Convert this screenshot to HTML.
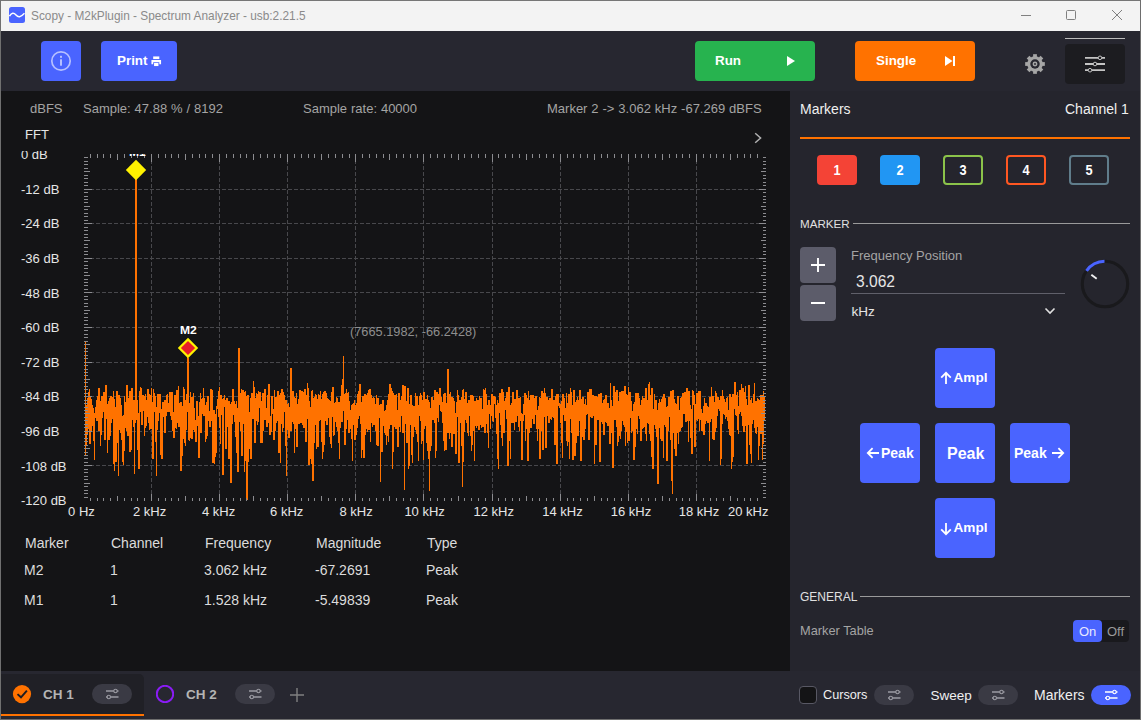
<!DOCTYPE html>
<html><head><meta charset="utf-8"><title>Scopy</title>
<style>
*{box-sizing:border-box;margin:0;padding:0}
html,body{width:1141px;height:720px;overflow:hidden;background:#272730}
body{font-family:"Liberation Sans",sans-serif;position:relative;color:#fff}
.abs{position:absolute}
.t{position:absolute;white-space:nowrap;line-height:1}
#titlebar{left:0;top:0;width:1141px;height:31px;background:#f3f3f3}
#toolbar{left:0;top:31px;width:1141px;height:60px;background:#272730}
#plotbg{left:0;top:91px;width:790px;height:580px;background:#141416}
#panel{left:790px;top:91px;width:351px;height:580px;background:#25252d}
#bottom{left:0;top:671px;width:1141px;height:49px;background:#272730}
.btn{position:absolute;border-radius:4px}
.blue{background:#4a64ff}
.b{font-weight:bold}
.mk{position:absolute;top:155px;width:40px;height:30px;border:2px solid;border-radius:4px;font-weight:bold;font-size:14.5px;color:#fff;text-align:center;line-height:27px}
.mk span{display:inline-block;transform:scaleX(.88)}
.pill{position:absolute;width:40px;height:20px;border-radius:10px;background:#3a3a44}
.tb{font-size:14px;color:#dcdcdc}
.yl,.xl{font-size:13px;color:#e6e6e6}
.hd{font-size:13px;color:#a4a4a4;word-spacing:0.3px}
</style></head><body>
<div id="titlebar" class="abs"></div>
<div id="toolbar" class="abs"></div>
<div id="plotbg" class="abs"></div>
<div id="panel" class="abs"></div>
<div id="bottom" class="abs"></div>

<!-- TITLEBAR -->
<div class="abs" style="left:0;top:0;width:1141px;height:1px;background:#767676"></div>
<div class="abs" style="left:0;top:0;width:1.3px;height:720px;background:#707070"></div>
<div class="abs" style="left:1139.7px;top:0;width:1.3px;height:720px;background:#6e6e6e"></div>
<div class="abs" style="left:0;top:718.6px;width:1141px;height:1.4px;background:#6e6e6e"></div>
<svg class="abs" style="left:9px;top:7px" width="16" height="16" viewBox="0 0 16 16"><rect width="16" height="16" rx="2.5" fill="#4a64ff"/><path d="M0.5 9.2 C2.5 5.5 4.8 5.5 7 8 S11.5 10.5 15.5 6.2" fill="none" stroke="#fff" stroke-width="1.5"/></svg>
<div class="t" id="ttl" style="left:31px;top:11px;font-size:11.85px;color:#8a8a8a">Scopy - M2kPlugin - Spectrum Analyzer - usb:2.21.5</div>
<svg class="abs" style="left:1010px;top:5px" width="125" height="22" viewBox="0 0 125 22" fill="none" stroke="#808080" stroke-width="1">
<path d="M11 10.5h10"/><rect x="56.5" y="5.5" width="9" height="9" rx="1"/><path d="M102 5l10 10M112 5l-10 10"/></svg>

<!-- TOOLBAR -->
<div class="btn blue" style="left:41px;top:41px;width:40px;height:40px"></div>
<svg class="abs" style="left:50px;top:50px" width="22" height="22" viewBox="0 0 22 22"><circle cx="11" cy="11" r="9.2" fill="none" stroke="#b6c0ff" stroke-width="1.7"/><rect x="10" y="9.3" width="2" height="6.4" fill="#b6c0ff"/><rect x="10" y="5.8" width="2" height="2" fill="#b6c0ff"/></svg>
<div class="btn blue" style="left:101px;top:41px;width:76px;height:40px"></div>
<div class="t b" style="left:117px;top:54px;font-size:13.4px">Print</div>
<svg class="abs" style="left:151px;top:56px" width="10.5" height="10.5" viewBox="0 0 12 12" fill="#fff"><rect x="2.5" y="0.5" width="7" height="3"/><path d="M0.5 4.5h11v5h-2v-2.5h-7v2.5h-2z"/><rect x="3.5" y="8" width="5" height="3.5"/></svg>

<div class="btn" style="left:695px;top:41px;width:120px;height:40px;background:#27b34f"></div>
<div class="t b" style="left:715px;top:54px;font-size:13.4px">Run</div>
<svg class="abs" style="left:786px;top:55px" width="10" height="12" viewBox="0 0 10 12"><path d="M1 1l8 5-8 5z" fill="#fff"/></svg>
<div class="btn" style="left:855px;top:41px;width:120px;height:40px;background:#ff7200"></div>
<div class="t b" style="left:876px;top:54px;font-size:13.4px">Single</div>
<svg class="abs" style="left:944px;top:55px" width="12" height="12" viewBox="0 0 12 12" fill="#fff"><path d="M1 1l7.5 5-7.5 5z"/><rect x="9" y="1" width="2" height="10"/></svg>

<!-- gear -->
<svg class="abs" style="left:1023px;top:52px" width="24" height="24" viewBox="-12.7 -12.7 25.4 25.4">
<g fill="#a6a6a6"><circle r="8.2"/>
<g id="th"><rect x="-2" y="-10.4" width="4" height="4"/></g>
<use href="#th" transform="rotate(45)"/><use href="#th" transform="rotate(90)"/><use href="#th" transform="rotate(135)"/><use href="#th" transform="rotate(180)"/><use href="#th" transform="rotate(225)"/><use href="#th" transform="rotate(270)"/><use href="#th" transform="rotate(315)"/></g>
<circle r="5" fill="#272730"/><circle r="2.6" fill="#a6a6a6"/><circle r="1" fill="#272730"/></svg>
<div class="abs" style="left:1065px;top:38px;width:60px;height:1px;background:#bcbcbc"></div>
<div class="btn" style="left:1065px;top:44px;width:60px;height:40px;background:#1c1c20"></div>
<svg class="abs" style="left:1083px;top:54px" width="24" height="20" viewBox="0 0 24 20"><g stroke="#c4c4c4" stroke-width="1.8"><path d="M2 3.8h20M2 10h20M2 16.2h20"/></g><g fill="#1c1c20" stroke="#c4c4c4" stroke-width="1"><circle cx="17" cy="3.8" r="1.8"/><circle cx="12" cy="10" r="1.8"/><circle cx="7" cy="16.2" r="1.8"/></g></svg>

<!-- PLOT -->
<svg class="abs" style="left:0;top:0" width="790" height="670" viewBox="0 0 790 670">
<g stroke="#48484c" stroke-width="1" stroke-dasharray="4 2" fill="none">
<path d="M151.5 154V501 M219.5 154V501 M287.5 154V501 M355.5 154V501 M423.5 154V501 M492.5 154V501 M560.5 154V501 M628.5 154V501 M696.5 154V501 M84 189.5H766 M84 223.5H766 M84 258.5H766 M84 292.5H766 M84 327.5H766 M84 362.5H766 M84 396.5H766 M84 431.5H766 M84 465.5H766"/>
</g>
<path d="M85.5 341.7L85.5 454.5L85.5 404.7L85.5 437.8L85.5 408.7L85.5 415.2L85.5 440.6L85.5 409.7L85.9 446.2L86.2 412.4L86.5 438.2L86.8 434.8L87.1 412.8L87.4 398.3L87.7 430.7L88.0 422.6L88.3 405.5L88.6 391.8L89.0 407.2L89.3 413.9L89.6 388.8L89.9 443.5L90.2 397.0L90.5 418.8L90.8 428.6L91.1 431.4L91.4 417.8L91.7 398.8L92.0 425.5L92.4 407.1L92.7 405.1L93.0 414.9L93.3 408.2L93.6 439.6L93.9 440.3L94.2 423.7L94.5 460.0L94.8 412.7L95.1 417.6L95.5 406.9L95.8 411.7L96.1 418.3L96.4 399.6L96.7 403.1L97.0 421.3L97.3 407.3L97.6 409.0L97.9 396.2L98.2 402.0L98.6 418.9L98.9 388.2L99.2 431.3L99.5 413.0L99.8 401.0L100.1 427.9L100.4 410.3L100.7 445.7L101.0 404.1L101.3 400.7L101.6 407.4L102.0 396.2L102.3 417.6L102.6 403.2L102.9 406.6L103.2 407.1L103.5 411.6L103.8 397.8L104.1 392.0L104.4 410.9L104.7 404.3L105.1 440.1L105.4 403.0L105.7 404.8L106.0 385.3L106.3 398.5L106.6 419.0L106.9 414.3L107.2 404.1L107.5 452.7L107.8 411.3L108.2 426.5L108.5 431.4L108.8 440.4L109.1 400.6L109.4 430.1L109.7 421.1L110.0 414.1L110.3 396.4L110.6 436.4L110.9 411.8L111.2 408.2L111.6 395.8L111.9 398.6L112.2 396.7L112.5 419.4L112.8 413.1L113.1 415.5L113.4 395.7L113.7 390.9L114.0 428.0L114.3 470.5L114.7 422.0L115.0 421.9L115.3 410.5L115.6 406.8L115.9 420.2L116.2 462.3L116.5 415.1L116.8 407.6L117.1 391.3L117.4 403.4L117.7 409.4L118.1 405.8L118.4 476.0L118.7 441.6L119.0 394.9L119.3 400.2L119.6 396.2L119.9 399.5L120.2 414.1L120.5 413.8L120.8 433.1L121.2 405.3L121.5 439.7L121.8 438.7L122.1 423.5L122.4 427.0L122.7 416.3L123.0 441.9L123.3 464.6L123.6 433.3L123.9 415.3L124.3 451.1L124.6 396.2L124.9 406.0L125.2 428.2L125.5 420.8L125.8 416.0L126.1 415.3L126.4 430.8L126.7 397.4L127.0 385.3L127.3 411.2L127.7 410.5L128.0 435.5L128.3 433.2L128.6 416.2L128.9 420.1L129.2 398.2L129.5 427.1L129.8 452.4L130.1 391.5L130.4 408.9L130.8 428.4L131.1 408.4L131.4 450.4L131.7 408.9L132.0 388.5L132.3 396.7L132.6 403.2L132.9 420.3L133.2 415.2L133.5 426.6L133.9 400.5L134.2 408.8L134.5 474.0L134.8 416.8L135.1 422.6L135.4 398.9L135.7 199.2L136.0 170.4L136.3 222.3L136.6 398.7L136.9 401.6L137.3 422.4L137.6 409.3L137.9 415.6L138.2 449.5L138.5 450.0L138.8 419.3L139.1 469.0L139.4 403.3L139.7 391.0L140.0 411.9L140.4 392.6L140.7 386.7L141.0 391.2L141.3 415.3L141.6 422.8L141.9 422.4L142.2 424.4L142.5 423.8L142.8 405.6L143.1 394.9L143.4 397.7L143.8 410.7L144.1 404.6L144.4 399.4L144.7 435.7L145.0 404.4L145.3 394.4L145.6 400.1L145.9 401.3L146.2 410.7L146.5 425.7L146.9 399.8L147.2 416.7L147.5 399.4L147.8 389.4L148.1 413.9L148.4 413.7L148.7 391.9L149.0 402.2L149.3 426.4L149.6 430.3L150.0 428.0L150.3 394.6L150.6 399.1L150.9 428.5L151.2 398.3L151.5 388.2L151.8 404.5L152.1 415.9L152.4 408.2L152.7 429.9L153.0 458.5L153.4 389.5L153.7 404.8L154.0 409.0L154.3 392.9L154.6 412.4L154.9 396.3L155.2 398.3L155.5 423.4L155.8 420.8L156.1 418.6L156.5 476.0L156.8 406.9L157.1 420.4L157.4 413.0L157.7 429.9L158.0 394.3L158.3 415.7L158.6 411.5L158.9 407.0L159.2 394.7L159.6 412.9L159.9 393.9L160.2 409.9L160.5 408.8L160.8 409.1L161.1 455.1L161.4 412.2L161.7 425.4L162.0 459.0L162.3 426.2L162.6 410.9L163.0 402.1L163.3 407.9L163.6 417.0L163.9 409.3L164.2 408.0L164.5 400.0L164.8 432.7L165.1 407.8L165.4 421.0L165.7 419.5L166.1 400.4L166.4 409.7L166.7 407.8L167.0 400.9L167.3 394.2L167.6 412.1L167.9 406.0L168.2 409.7L168.5 409.5L168.8 403.3L169.1 411.7L169.5 408.8L169.8 410.7L170.1 392.3L170.4 403.1L170.7 396.1L171.0 392.2L171.3 420.4L171.6 407.8L171.9 392.2L172.2 397.8L172.6 429.3L172.9 430.9L173.2 412.1L173.5 437.7L173.8 421.5L174.1 437.6L174.4 404.1L174.7 400.0L175.0 395.1L175.3 427.7L175.7 402.5L176.0 404.4L176.3 428.8L176.6 395.8L176.9 389.9L177.2 422.8L177.5 391.4L177.8 413.8L178.1 410.4L178.4 386.3L178.7 398.1L179.1 427.1L179.4 412.5L179.7 409.4L180.0 416.4L180.3 424.4L180.6 417.4L180.9 402.3L181.2 471.0L181.5 408.0L181.8 412.2L182.2 455.5L182.5 416.7L182.8 405.6L183.1 409.5L183.4 439.3L183.7 387.4L184.0 399.8L184.3 389.4L184.6 432.9L184.9 420.1L185.3 445.5L185.6 400.2L185.9 419.8L186.2 430.1L186.5 412.9L186.8 394.3L187.1 398.6L187.4 411.9L187.7 348.5L188.0 393.8L188.3 407.5L188.7 403.0L189.0 435.0L189.3 440.7L189.6 403.4L189.9 412.7L190.2 437.8L190.5 392.5L190.8 405.3L191.1 399.3L191.4 435.9L191.8 397.1L192.1 438.8L192.4 396.8L192.7 411.6L193.0 416.4L193.3 408.1L193.6 393.3L193.9 419.9L194.2 430.1L194.5 409.0L194.8 421.6L195.2 432.3L195.5 427.1L195.8 442.4L196.1 424.0L196.4 417.7L196.7 418.0L197.0 400.9L197.3 418.8L197.6 409.9L197.9 425.8L198.3 416.0L198.6 455.4L198.9 420.9L199.2 457.6L199.5 401.9L199.8 408.1L200.1 424.9L200.4 410.9L200.7 392.8L201.0 432.7L201.4 398.6L201.7 412.5L202.0 410.1L202.3 398.0L202.6 414.0L202.9 409.7L203.2 403.4L203.5 387.9L203.8 416.2L204.1 398.1L204.4 402.8L204.8 405.2L205.1 413.6L205.4 416.0L205.7 441.5L206.0 430.1L206.3 438.1L206.6 401.6L206.9 420.6L207.2 426.9L207.5 435.7L207.9 397.7L208.2 396.4L208.5 404.0L208.8 419.2L209.1 421.4L209.4 418.6L209.7 411.4L210.0 427.4L210.3 412.0L210.6 420.2L211.0 390.5L211.3 389.3L211.6 408.3L211.9 421.3L212.2 390.1L212.5 417.8L212.8 415.6L213.1 462.6L213.4 410.9L213.7 409.8L214.0 424.1L214.4 409.8L214.7 463.6L215.0 435.0L215.3 413.8L215.6 444.9L215.9 452.7L216.2 418.0L216.5 422.0L216.8 406.9L217.1 408.9L217.5 401.2L217.8 404.5L218.1 402.5L218.4 396.0L218.7 414.2L219.0 417.0L219.3 387.4L219.6 428.2L219.9 402.2L220.2 405.0L220.5 444.2L220.9 398.0L221.2 395.3L221.5 405.5L221.8 401.8L222.1 398.9L222.4 429.1L222.7 409.1L223.0 475.0L223.3 398.0L223.6 399.2L224.0 398.3L224.3 407.0L224.6 395.3L224.9 403.6L225.2 403.3L225.5 422.2L225.8 448.6L226.1 429.7L226.4 415.4L226.7 432.9L227.1 397.9L227.4 407.9L227.7 405.5L228.0 405.6L228.3 403.7L228.6 410.3L228.9 459.0L229.2 401.3L229.5 409.8L229.8 408.7L230.1 404.4L230.5 439.0L230.8 483.0L231.1 420.8L231.4 437.4L231.7 420.1L232.0 402.0L232.3 423.8L232.6 401.6L232.9 388.9L233.2 410.2L233.6 414.5L233.9 410.7L234.2 403.6L234.5 400.6L234.8 405.9L235.1 405.0L235.4 436.9L235.7 428.3L236.0 420.7L236.3 401.5L236.7 418.0L237.0 407.6L237.3 460.2L237.6 440.1L237.9 419.9L238.2 472.0L238.5 403.3L238.8 403.9L239.1 347.7L239.4 409.3L239.7 411.2L240.1 411.2L240.4 431.3L240.7 395.2L241.0 424.2L241.3 388.6L241.6 392.7L241.9 455.9L242.2 411.5L242.5 398.6L242.8 389.9L243.2 411.8L243.5 419.9L243.8 423.5L244.1 392.0L244.4 423.4L244.7 472.0L245.0 428.9L245.3 409.1L245.6 391.4L245.9 429.8L246.2 398.6L246.6 409.6L246.9 395.6L247.2 499.5L247.5 422.1L247.8 395.0L248.1 410.4L248.4 451.5L248.7 461.6L249.0 411.8L249.3 418.2L249.7 429.0L250.0 416.2L250.3 417.5L250.6 397.8L250.9 459.4L251.2 397.8L251.5 431.1L251.8 393.3L252.1 402.6L252.4 394.8L252.8 418.8L253.1 414.9L253.4 414.1L253.7 381.5L254.0 406.8L254.3 415.4L254.6 412.6L254.9 419.5L255.2 443.0L255.5 433.3L255.8 398.0L256.2 419.0L256.5 392.7L256.8 421.0L257.1 420.1L257.4 409.5L257.7 424.9L258.0 414.9L258.3 391.1L258.6 395.7L258.9 398.9L259.3 405.4L259.6 394.1L259.9 392.3L260.2 408.2L260.5 402.3L260.8 442.7L261.1 401.9L261.4 411.8L261.7 401.2L262.0 404.9L262.3 419.0L262.7 442.8L263.0 393.3L263.3 430.3L263.6 411.0L263.9 416.2L264.2 418.4L264.5 401.7L264.8 388.8L265.1 420.4L265.4 404.5L265.8 418.2L266.1 407.9L266.4 414.0L266.7 426.6L267.0 427.1L267.3 423.6L267.6 394.6L267.9 410.0L268.2 422.8L268.5 394.6L268.9 383.7L269.2 411.8L269.5 429.1L269.8 424.7L270.1 434.8L270.4 416.3L270.7 434.8L271.0 421.6L271.3 420.5L271.6 407.5L271.9 395.6L272.3 401.3L272.6 413.2L272.9 413.2L273.2 409.1L273.5 414.7L273.8 416.4L274.1 439.8L274.4 419.4L274.7 389.9L275.0 430.5L275.4 409.8L275.7 405.4L276.0 396.8L276.3 423.0L276.6 419.8L276.9 421.0L277.2 413.8L277.5 411.9L277.8 391.3L278.1 397.4L278.5 396.3L278.8 453.1L279.1 448.2L279.4 402.7L279.7 395.1L280.0 410.9L280.3 406.9L280.6 462.5L280.9 393.3L281.2 398.4L281.5 397.1L281.9 389.4L282.2 421.0L282.5 432.4L282.8 427.7L283.1 409.1L283.4 403.6L283.7 392.3L284.0 402.3L284.3 404.8L284.6 400.7L285.0 411.5L285.3 408.1L285.6 445.5L285.9 400.1L286.2 422.0L286.5 476.0L286.8 404.9L287.1 418.1L287.4 430.2L287.7 420.8L288.0 405.2L288.4 403.1L288.7 432.0L289.0 438.1L289.3 409.1L289.6 407.0L289.9 414.3L290.2 422.6L290.5 406.4L290.8 431.3L291.1 367.9L291.5 411.4L291.8 390.8L292.1 404.9L292.4 395.8L292.7 410.8L293.0 421.9L293.3 421.1L293.6 390.7L293.9 402.9L294.2 417.9L294.6 453.1L294.9 410.0L295.2 403.9L295.5 413.0L295.8 420.5L296.1 404.1L296.4 393.4L296.7 422.4L297.0 447.4L297.3 416.4L297.6 412.9L298.0 403.6L298.3 424.3L298.6 399.5L298.9 401.7L299.2 409.8L299.5 423.8L299.8 389.7L300.1 417.7L300.4 398.6L300.7 422.1L301.1 422.7L301.4 400.9L301.7 418.5L302.0 391.4L302.3 410.1L302.6 425.0L302.9 422.6L303.2 413.1L303.5 404.2L303.8 391.7L304.2 428.4L304.5 414.0L304.8 423.2L305.1 389.1L305.4 428.9L305.7 442.1L306.0 440.2L306.3 414.0L306.6 395.0L306.9 395.8L307.2 401.9L307.6 382.9L307.9 393.0L308.2 416.8L308.5 425.2L308.8 464.7L309.1 401.4L309.4 448.3L309.7 404.2L310.0 414.7L310.3 414.9L310.7 416.7L311.0 426.5L311.3 463.5L311.6 415.8L311.9 391.1L312.2 430.7L312.5 390.3L312.8 481.0L313.1 415.6L313.4 398.5L313.7 398.5L314.1 412.5L314.4 442.7L314.7 410.9L315.0 414.9L315.3 393.8L315.6 424.6L315.9 415.3L316.2 395.1L316.5 449.0L316.8 413.3L317.2 398.9L317.5 400.7L317.8 445.2L318.1 447.2L318.4 439.7L318.7 393.7L319.0 420.5L319.3 401.4L319.6 395.0L319.9 416.4L320.3 419.7L320.6 390.9L320.9 405.9L321.2 420.3L321.5 402.4L321.8 417.4L322.1 419.5L322.4 459.4L322.7 394.0L323.0 405.3L323.3 392.2L323.7 451.8L324.0 421.9L324.3 410.8L324.6 391.0L324.9 391.3L325.2 414.3L325.5 420.9L325.8 412.6L326.1 410.2L326.4 393.2L326.8 425.4L327.1 399.3L327.4 401.7L327.7 398.5L328.0 400.4L328.3 406.2L328.6 416.9L328.9 417.3L329.2 415.4L329.5 400.1L329.9 436.6L330.2 424.3L330.5 401.2L330.8 421.1L331.1 439.2L331.4 447.5L331.7 408.1L332.0 417.0L332.3 388.2L332.6 395.8L332.9 386.8L333.3 420.1L333.6 435.8L333.9 434.0L334.2 410.0L334.5 402.7L334.8 411.9L335.1 421.9L335.4 413.1L335.7 405.8L336.0 403.9L336.4 401.3L336.7 397.5L337.0 404.2L337.3 431.0L337.6 397.7L337.9 418.6L338.2 407.6L338.5 414.9L338.8 401.7L339.1 424.2L339.4 459.0L339.8 421.2L340.1 427.8L340.4 395.7L340.7 407.2L341.0 417.0L341.3 413.9L341.6 385.5L341.9 409.7L342.2 422.1L342.5 399.1L342.9 404.6L343.2 386.0L343.5 356.3L343.8 410.9L344.1 398.6L344.4 397.7L344.7 394.1L345.0 445.3L345.3 418.6L345.6 431.2L346.0 424.9L346.3 389.3L346.6 407.0L346.9 393.1L347.2 414.9L347.5 396.6L347.8 411.8L348.1 420.4L348.4 400.2L348.7 392.0L349.0 432.8L349.4 406.6L349.7 405.8L350.0 422.9L350.3 415.1L350.6 428.9L350.9 423.9L351.2 420.7L351.5 406.5L351.8 404.7L352.1 423.9L352.5 461.3L352.8 416.9L353.1 403.8L353.4 425.2L353.7 417.7L354.0 423.9L354.3 399.6L354.6 408.2L354.9 439.5L355.2 433.3L355.6 414.0L355.9 408.2L356.2 405.1L356.5 434.7L356.8 426.9L357.1 403.2L357.4 413.4L357.7 419.1L358.0 417.9L358.3 391.3L358.6 417.6L359.0 407.6L359.3 415.6L359.6 413.1L359.9 396.7L360.2 383.6L360.5 415.3L360.8 424.3L361.1 402.0L361.4 423.9L361.7 458.1L362.1 412.8L362.4 398.6L362.7 413.5L363.0 395.8L363.3 411.4L363.6 427.0L363.9 458.0L364.2 408.1L364.5 405.1L364.8 394.4L365.1 435.1L365.5 405.7L365.8 415.0L366.1 409.8L366.4 428.5L366.7 419.1L367.0 409.2L367.3 393.4L367.6 432.4L367.9 410.3L368.2 399.2L368.6 390.0L368.9 424.3L369.2 430.4L369.5 392.2L369.8 388.9L370.1 410.6L370.4 441.7L370.7 393.4L371.0 414.3L371.3 394.7L371.7 405.8L372.0 398.4L372.3 427.2L372.6 399.9L372.9 422.7L373.2 413.6L373.5 397.5L373.8 398.2L374.1 425.4L374.4 422.9L374.7 413.8L375.1 409.3L375.4 414.4L375.7 430.8L376.0 421.1L376.3 402.2L376.6 395.1L376.9 445.1L377.2 407.7L377.5 401.0L377.8 446.0L378.2 397.8L378.5 431.4L378.8 406.5L379.1 408.2L379.4 405.5L379.7 418.0L380.0 413.0L380.3 407.0L380.6 482.0L380.9 404.4L381.3 411.9L381.6 412.2L381.9 452.2L382.2 405.8L382.5 410.3L382.8 421.8L383.1 400.8L383.4 400.2L383.7 411.5L384.0 425.6L384.3 410.9L384.7 432.6L385.0 430.2L385.3 412.5L385.6 434.7L385.9 412.1L386.2 409.6L386.5 445.2L386.8 405.2L387.1 436.1L387.4 401.9L387.8 400.2L388.1 409.5L388.4 441.5L388.7 409.8L389.0 414.7L389.3 391.5L389.6 429.4L389.9 397.0L390.2 383.9L390.5 401.9L390.8 398.8L391.2 424.6L391.5 388.0L391.8 410.2L392.1 391.0L392.4 394.0L392.7 468.5L393.0 399.8L393.3 393.1L393.6 439.1L393.9 415.9L394.3 401.0L394.6 427.3L394.9 395.1L395.2 419.6L395.5 398.8L395.8 428.7L396.1 409.9L396.4 393.8L396.7 423.6L397.0 420.2L397.4 409.7L397.7 417.3L398.0 446.5L398.3 425.4L398.6 427.1L398.9 392.7L399.2 403.7L399.5 395.2L399.8 426.5L400.1 400.0L400.4 431.7L400.8 408.8L401.1 405.2L401.4 415.5L401.7 396.3L402.0 408.0L402.3 407.1L402.6 395.8L402.9 432.9L403.2 385.3L403.5 405.4L403.9 414.0L404.2 399.5L404.5 490.0L404.8 386.1L405.1 407.2L405.4 415.4L405.7 400.7L406.0 412.1L406.3 425.9L406.6 401.5L407.0 443.0L407.3 398.6L407.6 420.7L407.9 405.1L408.2 387.6L408.5 469.0L408.8 404.3L409.1 417.6L409.4 465.6L409.7 428.2L410.0 405.9L410.4 412.5L410.7 409.5L411.0 395.1L411.3 429.8L411.6 422.3L411.9 404.6L412.2 452.8L412.5 462.8L412.8 432.7L413.1 415.6L413.5 422.5L413.8 407.0L414.1 406.8L414.4 423.8L414.7 405.6L415.0 410.9L415.3 429.6L415.6 392.6L415.9 421.3L416.2 428.2L416.5 434.1L416.9 405.1L417.2 396.4L417.5 400.1L417.8 413.7L418.1 420.1L418.4 461.2L418.7 404.9L419.0 407.7L419.3 415.9L419.6 404.9L420.0 412.0L420.3 392.6L420.6 401.9L420.9 421.0L421.2 394.7L421.5 444.2L421.8 408.8L422.1 413.5L422.4 421.7L422.7 440.5L423.1 400.2L423.4 460.3L423.7 408.1L424.0 392.3L424.3 428.8L424.6 424.2L424.9 406.2L425.2 409.7L425.5 405.0L425.8 398.9L426.1 426.0L426.5 417.8L426.8 418.2L427.1 442.9L427.4 395.5L427.7 400.0L428.0 402.5L428.3 458.6L428.6 401.4L428.9 411.2L429.2 401.6L429.6 491.0L429.9 422.4L430.2 432.8L430.5 422.0L430.8 445.8L431.1 416.6L431.4 401.3L431.7 403.2L432.0 397.5L432.3 402.6L432.6 420.0L433.0 408.0L433.3 412.3L433.6 399.8L433.9 409.1L434.2 420.1L434.5 405.0L434.8 390.2L435.1 423.0L435.4 395.9L435.7 457.7L436.1 420.4L436.4 421.8L436.7 401.5L437.0 392.0L437.3 401.4L437.6 417.0L437.9 395.9L438.2 416.9L438.5 421.6L438.8 394.5L439.2 405.4L439.5 403.3L439.8 404.2L440.1 388.4L440.4 411.1L440.7 397.8L441.0 403.1L441.3 397.0L441.6 412.3L441.9 402.2L442.2 407.5L442.6 417.9L442.9 423.3L443.2 405.7L443.5 436.8L443.8 394.3L444.1 428.6L444.4 450.5L444.7 432.7L445.0 393.2L445.3 416.1L445.7 428.9L446.0 449.6L446.3 444.9L446.6 403.3L446.9 405.3L447.2 403.1L447.5 401.7L447.8 432.7L448.1 369.3L448.4 415.3L448.8 398.7L449.1 398.6L449.4 395.4L449.7 439.0L450.0 396.5L450.3 394.1L450.6 392.1L450.9 432.6L451.2 423.7L451.5 432.0L451.8 447.3L452.2 397.4L452.5 398.9L452.8 405.3L453.1 398.4L453.4 405.4L453.7 418.9L454.0 433.5L454.3 433.8L454.6 401.0L454.9 423.8L455.3 417.3L455.6 412.8L455.9 453.6L456.2 420.6L456.5 419.2L456.8 402.5L457.1 415.1L457.4 417.2L457.7 390.3L458.0 409.8L458.3 397.3L458.7 405.8L459.0 463.0L459.3 413.2L459.6 412.3L459.9 400.4L460.2 416.0L460.5 402.9L460.8 408.6L461.1 423.0L461.4 396.8L461.8 434.8L462.1 398.6L462.4 487.0L462.7 464.2L463.0 400.8L463.3 388.6L463.6 461.7L463.9 410.2L464.2 399.5L464.5 425.3L464.9 410.1L465.2 416.0L465.5 398.1L465.8 420.3L466.1 392.1L466.4 419.1L466.7 423.1L467.0 403.0L467.3 410.0L467.6 432.3L467.9 405.2L468.3 436.3L468.6 399.9L468.9 403.1L469.2 399.9L469.5 405.5L469.8 415.6L470.1 413.7L470.4 414.0L470.7 395.4L471.0 435.5L471.4 395.5L471.7 451.3L472.0 423.7L472.3 420.2L472.6 394.8L472.9 409.9L473.2 414.6L473.5 395.7L473.8 421.9L474.1 411.4L474.5 461.0L474.8 401.1L475.1 401.2L475.4 404.9L475.7 416.0L476.0 417.0L476.3 427.6L476.6 397.6L476.9 404.3L477.2 401.5L477.5 426.4L477.9 412.2L478.2 400.4L478.5 407.2L478.8 430.4L479.1 411.3L479.4 395.7L479.7 421.7L480.0 424.7L480.3 418.2L480.6 402.9L481.0 397.6L481.3 427.7L481.6 427.6L481.9 421.1L482.2 417.0L482.5 409.1L482.8 427.1L483.1 416.9L483.4 424.9L483.7 389.0L484.0 402.0L484.4 433.3L484.7 390.5L485.0 433.3L485.3 414.4L485.6 387.6L485.9 399.6L486.2 401.9L486.5 412.4L486.8 424.4L487.1 405.2L487.5 432.7L487.8 423.7L488.1 414.2L488.4 447.5L488.7 413.8L489.0 399.7L489.3 403.3L489.6 409.9L489.9 405.3L490.2 411.3L490.6 428.9L490.9 406.3L491.2 413.6L491.5 401.6L491.8 394.5L492.1 412.6L492.4 407.3L492.7 401.3L493.0 412.9L493.3 422.2L493.6 402.2L494.0 395.9L494.3 400.4L494.6 403.0L494.9 397.2L495.2 403.7L495.5 405.0L495.8 411.6L496.1 417.6L496.4 405.5L496.7 433.8L497.1 413.0L497.4 400.1L497.7 402.6L498.0 405.4L498.3 468.5L498.6 412.8L498.9 411.6L499.2 405.7L499.5 413.4L499.8 403.9L500.2 393.1L500.5 425.4L500.8 404.6L501.1 400.2L501.4 414.2L501.7 410.3L502.0 389.1L502.3 446.0L502.6 408.4L502.9 427.2L503.2 400.1L503.6 392.4L503.9 409.3L504.2 433.4L504.5 407.3L504.8 408.5L505.1 402.4L505.4 409.5L505.7 405.1L506.0 398.2L506.3 409.2L506.7 413.3L507.0 391.8L507.3 423.4L507.6 403.6L507.9 414.1L508.2 465.6L508.5 430.8L508.8 387.5L509.1 415.7L509.4 440.9L509.7 419.6L510.1 413.8L510.4 459.4L510.7 413.0L511.0 412.9L511.3 403.1L511.6 415.8L511.9 420.1L512.2 422.5L512.5 401.6L512.8 392.4L513.2 409.0L513.5 422.9L513.8 399.3L514.1 414.1L514.4 423.3L514.7 430.1L515.0 400.3L515.3 399.0L515.6 405.3L515.9 411.1L516.3 407.7L516.6 422.4L516.9 390.3L517.2 415.8L517.5 405.1L517.8 398.6L518.1 398.8L518.4 411.1L518.7 418.5L519.0 408.2L519.3 430.5L519.7 398.0L520.0 415.7L520.3 397.3L520.6 420.0L520.9 414.8L521.2 420.7L521.5 412.7L521.8 425.2L522.1 459.7L522.4 419.2L522.8 421.2L523.1 418.2L523.4 410.7L523.7 412.6L524.0 405.2L524.3 404.4L524.6 415.3L524.9 393.2L525.2 397.1L525.5 440.8L525.9 398.3L526.2 394.6L526.5 400.0L526.8 429.0L527.1 398.1L527.4 405.3L527.7 457.9L528.0 461.2L528.3 391.5L528.6 404.5L528.9 420.9L529.3 433.3L529.6 428.8L529.9 421.9L530.2 400.3L530.5 416.1L530.8 427.9L531.1 394.7L531.4 399.7L531.7 426.6L532.0 395.4L532.4 406.2L532.7 400.1L533.0 404.1L533.3 395.2L533.6 399.8L533.9 397.8L534.2 424.3L534.5 403.3L534.8 408.8L535.1 401.6L535.4 412.2L535.8 395.8L536.1 408.0L536.4 420.1L536.7 421.9L537.0 429.1L537.3 410.2L537.6 440.5L537.9 411.1L538.2 428.6L538.5 410.3L538.9 410.0L539.2 408.5L539.5 396.8L539.8 458.6L540.1 411.1L540.4 407.7L540.7 404.2L541.0 397.7L541.3 414.8L541.6 413.0L542.0 390.7L542.3 437.2L542.6 405.2L542.9 405.2L543.2 449.7L543.5 406.1L543.8 403.6L544.1 393.0L544.4 416.8L544.7 388.0L545.0 409.6L545.4 410.5L545.7 395.0L546.0 447.5L546.3 402.4L546.6 405.6L546.9 416.4L547.2 396.8L547.5 415.2L547.8 410.9L548.1 409.0L548.5 400.5L548.8 423.4L549.1 412.4L549.4 412.9L549.7 408.0L550.0 398.3L550.3 418.6L550.6 398.3L550.9 413.6L551.2 409.8L551.6 419.7L551.9 409.7L552.2 389.0L552.5 404.6L552.8 399.7L553.1 416.8L553.4 417.4L553.7 418.3L554.0 406.9L554.3 405.3L554.6 400.0L555.0 445.4L555.3 402.2L555.6 395.7L555.9 408.3L556.2 442.6L556.5 418.2L556.8 464.3L557.1 393.7L557.4 406.1L557.7 404.5L558.1 399.8L558.4 394.4L558.7 406.0L559.0 405.9L559.3 405.5L559.6 403.2L559.9 406.6L560.2 403.7L560.5 423.3L560.8 404.2L561.1 411.5L561.5 400.8L561.8 433.4L562.1 425.5L562.4 457.6L562.7 400.4L563.0 394.1L563.3 404.5L563.6 415.1L563.9 398.5L564.2 399.9L564.6 407.7L564.9 420.5L565.2 418.2L565.5 412.9L565.8 417.4L566.1 412.5L566.4 405.0L566.7 392.8L567.0 441.4L567.3 407.6L567.7 445.6L568.0 431.2L568.3 399.0L568.6 407.3L568.9 393.8L569.2 411.9L569.5 458.6L569.8 414.3L570.1 406.7L570.4 392.6L570.7 388.1L571.1 410.8L571.4 413.3L571.7 433.3L572.0 404.9L572.3 423.3L572.6 427.9L572.9 457.4L573.2 460.0L573.5 430.9L573.8 390.1L574.2 435.2L574.5 396.4L574.8 430.1L575.1 455.7L575.4 402.4L575.7 421.4L576.0 401.8L576.3 425.0L576.6 442.5L576.9 400.4L577.2 402.6L577.6 397.1L577.9 402.0L578.2 435.8L578.5 405.5L578.8 402.7L579.1 411.4L579.4 392.9L579.7 420.7L580.0 390.3L580.3 402.4L580.7 461.3L581.0 458.1L581.3 404.7L581.6 398.7L581.9 436.5L582.2 417.7L582.5 402.0L582.8 426.7L583.1 396.8L583.4 410.4L583.8 440.2L584.1 415.1L584.4 407.3L584.7 412.2L585.0 403.8L585.3 428.6L585.6 399.5L585.9 415.3L586.2 404.9L586.5 405.4L586.8 413.0L587.2 414.4L587.5 399.9L587.8 392.0L588.1 400.0L588.4 407.6L588.7 418.6L589.0 440.1L589.3 389.1L589.6 402.9L589.9 398.3L590.3 416.7L590.6 406.2L590.9 388.7L591.2 398.1L591.5 406.4L591.8 417.8L592.1 412.6L592.4 395.5L592.7 414.7L593.0 403.5L593.4 406.4L593.7 395.1L594.0 399.1L594.3 419.1L594.6 463.6L594.9 412.9L595.2 406.9L595.5 398.8L595.8 395.6L596.1 444.7L596.4 398.1L596.8 398.9L597.1 396.6L597.4 407.4L597.7 419.6L598.0 397.3L598.3 399.1L598.6 403.6L598.9 394.1L599.2 416.0L599.5 435.7L599.9 408.0L600.2 462.0L600.5 424.1L600.8 401.3L601.1 393.0L601.4 421.9L601.7 406.2L602.0 403.8L602.3 411.2L602.6 423.7L602.9 420.7L603.3 401.2L603.6 399.7L603.9 411.4L604.2 435.3L604.5 399.1L604.8 400.4L605.1 422.0L605.4 407.1L605.7 395.1L606.0 395.7L606.4 409.2L606.7 410.8L607.0 406.8L607.3 424.9L607.6 424.7L607.9 425.5L608.2 403.0L608.5 415.3L608.8 407.7L609.1 413.7L609.5 409.3L609.8 428.2L610.1 444.0L610.4 383.2L610.7 414.8L611.0 432.7L611.3 405.3L611.6 399.9L611.9 427.6L612.2 406.5L612.5 416.1L612.9 467.8L613.2 453.9L613.5 447.6L613.8 386.1L614.1 396.6L614.4 410.4L614.7 407.6L615.0 420.3L615.3 400.2L615.6 412.7L616.0 391.9L616.3 400.6L616.6 398.6L616.9 390.4L617.2 420.7L617.5 446.1L617.8 424.1L618.1 425.5L618.4 435.9L618.7 442.3L619.1 407.9L619.4 396.4L619.7 411.5L620.0 391.8L620.3 394.4L620.6 439.3L620.9 406.5L621.2 413.9L621.5 431.1L621.8 390.8L622.1 420.5L622.5 407.7L622.8 405.1L623.1 391.0L623.4 404.1L623.7 414.0L624.0 411.9L624.3 427.2L624.6 390.1L624.9 385.7L625.2 422.7L625.6 445.8L625.9 420.6L626.2 415.8L626.5 394.8L626.8 394.7L627.1 397.9L627.4 443.3L627.7 399.9L628.0 402.7L628.3 404.9L628.6 387.3L629.0 441.1L629.3 428.6L629.6 401.1L629.9 392.4L630.2 403.8L630.5 418.3L630.8 406.7L631.1 401.0L631.4 432.8L631.7 417.1L632.1 420.5L632.4 430.7L632.7 410.6L633.0 426.5L633.3 421.6L633.6 428.7L633.9 403.8L634.2 460.0L634.5 402.4L634.8 424.5L635.2 446.7L635.5 393.3L635.8 422.8L636.1 392.8L636.4 396.6L636.7 395.5L637.0 429.1L637.3 411.9L637.6 433.9L637.9 393.2L638.2 397.7L638.6 405.5L638.9 411.7L639.2 416.4L639.5 398.5L639.8 410.8L640.1 405.5L640.4 428.8L640.7 422.7L641.0 440.9L641.3 402.5L641.7 408.1L642.0 428.6L642.3 396.4L642.6 420.0L642.9 413.3L643.2 427.6L643.5 419.8L643.8 397.8L644.1 416.6L644.4 426.6L644.8 410.3L645.1 417.4L645.4 394.7L645.7 431.8L646.0 388.5L646.3 440.9L646.6 395.2L646.9 404.1L647.2 423.4L647.5 410.8L647.8 419.0L648.2 420.5L648.5 424.0L648.8 415.3L649.1 385.9L649.4 382.4L649.7 393.4L650.0 433.9L650.3 418.8L650.6 395.1L650.9 440.7L651.3 402.1L651.6 418.6L651.9 388.5L652.2 457.0L652.5 399.1L652.8 468.7L653.1 429.0L653.4 458.7L653.7 409.0L654.0 425.2L654.3 412.4L654.7 394.2L655.0 422.9L655.3 407.4L655.6 429.2L655.9 425.6L656.2 400.5L656.5 402.6L656.8 424.4L657.1 436.6L657.4 435.3L657.8 483.8L658.1 410.1L658.4 419.6L658.7 423.7L659.0 406.0L659.3 402.8L659.6 398.9L659.9 407.0L660.2 424.0L660.5 439.0L660.9 401.9L661.2 413.4L661.5 402.3L661.8 441.2L662.1 399.0L662.4 416.6L662.7 397.7L663.0 396.7L663.3 410.2L663.6 457.5L663.9 394.3L664.3 410.8L664.6 396.3L664.9 420.0L665.2 425.1L665.5 398.1L665.8 415.1L666.1 426.9L666.4 415.0L666.7 406.6L667.0 461.4L667.4 412.0L667.7 409.4L668.0 431.0L668.3 402.5L668.6 398.7L668.9 396.6L669.2 417.2L669.5 402.6L669.8 414.5L670.1 401.2L670.5 439.9L670.8 396.3L671.1 391.3L671.4 410.1L671.7 409.5L672.0 408.9L672.3 494.0L672.6 453.8L672.9 389.9L673.2 422.5L673.5 425.4L673.9 433.2L674.2 420.9L674.5 398.7L674.8 449.0L675.1 434.0L675.4 403.1L675.7 424.5L676.0 455.8L676.3 406.5L676.6 407.3L677.0 409.1L677.3 402.9L677.6 433.2L677.9 396.4L678.2 402.4L678.5 443.8L678.8 430.8L679.1 410.2L679.4 409.9L679.7 419.3L680.0 430.9L680.4 413.5L680.7 429.3L681.0 406.7L681.3 396.8L681.6 428.4L681.9 407.4L682.2 401.4L682.5 426.9L682.8 398.4L683.1 392.6L683.5 414.2L683.8 412.9L684.1 397.8L684.4 409.0L684.7 413.9L685.0 392.3L685.3 400.3L685.6 416.4L685.9 421.5L686.2 416.6L686.6 412.3L686.9 388.1L687.2 399.2L687.5 394.2L687.8 398.8L688.1 397.4L688.4 441.7L688.7 409.3L689.0 390.9L689.3 392.8L689.6 421.0L690.0 412.9L690.3 405.3L690.6 415.3L690.9 408.8L691.2 438.3L691.5 412.4L691.8 409.8L692.1 453.7L692.4 429.1L692.7 389.7L693.1 400.3L693.4 392.6L693.7 405.3L694.0 399.0L694.3 395.7L694.6 395.7L694.9 447.3L695.2 405.0L695.5 420.1L695.8 403.8L696.2 419.6L696.5 408.4L696.8 393.5L697.1 405.7L697.4 420.9L697.7 409.2L698.0 412.4L698.3 391.5L698.6 418.9L698.9 418.0L699.2 404.8L699.6 431.1L699.9 406.6L700.2 391.1L700.5 409.4L700.8 419.9L701.1 411.2L701.4 408.7L701.7 428.2L702.0 430.7L702.3 429.9L702.7 418.6L703.0 413.5L703.3 418.9L703.6 421.3L703.9 435.2L704.2 408.3L704.5 397.8L704.8 406.1L705.1 407.5L705.4 404.7L705.7 424.0L706.1 402.7L706.4 411.4L706.7 408.2L707.0 406.0L707.3 411.1L707.6 417.7L707.9 421.4L708.2 422.7L708.5 409.5L708.8 414.5L709.2 406.9L709.5 460.8L709.8 415.8L710.1 396.8L710.4 421.6L710.7 407.9L711.0 410.3L711.3 419.0L711.6 386.8L711.9 418.5L712.3 400.4L712.6 427.3L712.9 438.8L713.2 396.4L713.5 412.2L713.8 439.8L714.1 414.3L714.4 412.2L714.7 401.8L715.0 432.4L715.3 422.5L715.7 390.8L716.0 401.7L716.3 427.7L716.6 416.5L716.9 415.8L717.2 403.9L717.5 405.9L717.8 397.3L718.1 398.5L718.4 409.3L718.8 401.7L719.1 401.5L719.4 400.9L719.7 410.8L720.0 400.0L720.3 402.7L720.6 464.9L720.9 430.3L721.2 396.4L721.5 459.3L721.9 406.9L722.2 410.0L722.5 390.4L722.8 407.4L723.1 413.0L723.4 400.0L723.7 396.3L724.0 406.2L724.3 414.6L724.6 411.7L724.9 411.5L725.3 402.2L725.6 418.6L725.9 414.1L726.2 408.0L726.5 414.4L726.8 417.2L727.1 399.9L727.4 397.4L727.7 410.0L728.0 412.0L728.4 425.3L728.7 418.1L729.0 428.6L729.3 407.3L729.6 407.1L729.9 435.2L730.2 393.7L730.5 417.1L730.8 397.6L731.1 397.8L731.4 468.7L731.8 423.8L732.1 412.7L732.4 394.3L732.7 462.1L733.0 443.2L733.3 407.6L733.6 410.0L733.9 393.7L734.2 400.4L734.5 408.6L734.9 382.1L735.2 409.3L735.5 409.3L735.8 403.5L736.1 414.2L736.4 415.6L736.7 406.6L737.0 415.8L737.3 391.8L737.6 403.8L738.0 409.0L738.3 433.7L738.6 414.8L738.9 413.7L739.2 407.8L739.5 407.3L739.8 395.9L740.1 390.3L740.4 410.4L740.7 412.2L741.0 405.6L741.4 383.9L741.7 416.2L742.0 408.9L742.3 398.8L742.6 426.3L742.9 417.4L743.2 388.5L743.5 398.4L743.8 409.5L744.1 432.2L744.5 395.2L744.8 403.4L745.1 398.6L745.4 386.2L745.7 395.5L746.0 412.9L746.3 427.5L746.6 418.8L746.9 464.0L747.2 409.8L747.6 425.0L747.9 425.4L748.2 405.4L748.5 406.3L748.8 415.8L749.1 385.0L749.4 405.2L749.7 444.7L750.0 413.3L750.3 399.9L750.6 417.9L751.0 403.3L751.3 463.3L751.6 397.7L751.9 406.9L752.2 404.1L752.5 424.4L752.8 410.0L753.1 408.1L753.4 420.0L753.7 404.8L754.1 408.8L754.4 383.2L754.7 407.3L755.0 413.3L755.3 430.9L755.6 427.5L755.9 400.9L756.2 432.7L756.5 433.5L756.8 426.3L757.1 409.1L757.5 398.5L757.8 406.0L758.1 399.1L758.4 439.7L758.7 460.2L759.0 400.5L759.3 417.1L759.6 402.5L759.9 415.7L760.2 426.4L760.6 420.0L760.9 433.6L761.2 394.7L761.5 407.1L761.8 415.9L762.1 411.8L762.4 414.4L762.7 460.0L763.0 395.4L763.3 407.0L763.7 390.7L764.0 412.2L764.3 405.8L764.6 421.0" fill="none" stroke="#ff7200" stroke-width="1.5" stroke-linejoin="bevel" shape-rendering="crispEdges"/>
<g stroke="#8c8c90" stroke-width="1" fill="none">
<path d="M90.5 154v4 M90.5 498v3 M97.5 154v4 M97.5 498v3 M103.5 154v4 M103.5 498v3 M110.5 154v4 M110.5 498v3 M117.5 154v6 M117.5 496v5 M124.5 154v4 M124.5 498v3 M131.5 154v4 M131.5 498v3 M137.5 154v4 M137.5 498v3 M144.5 154v4 M144.5 498v3 M151.5 154v8 M151.5 494v7 M158.5 154v4 M158.5 498v3 M165.5 154v4 M165.5 498v3 M171.5 154v4 M171.5 498v3 M178.5 154v4 M178.5 498v3 M185.5 154v6 M185.5 496v5 M192.5 154v4 M192.5 498v3 M199.5 154v4 M199.5 498v3 M205.5 154v4 M205.5 498v3 M212.5 154v4 M212.5 498v3 M219.5 154v8 M219.5 494v7 M226.5 154v4 M226.5 498v3 M233.5 154v4 M233.5 498v3 M240.5 154v4 M240.5 498v3 M246.5 154v4 M246.5 498v3 M253.5 154v6 M253.5 496v5 M260.5 154v4 M260.5 498v3 M267.5 154v4 M267.5 498v3 M274.5 154v4 M274.5 498v3 M280.5 154v4 M280.5 498v3 M287.5 154v8 M287.5 494v7 M294.5 154v4 M294.5 498v3 M301.5 154v4 M301.5 498v3 M308.5 154v4 M308.5 498v3 M314.5 154v4 M314.5 498v3 M321.5 154v6 M321.5 496v5 M328.5 154v4 M328.5 498v3 M335.5 154v4 M335.5 498v3 M342.5 154v4 M342.5 498v3 M349.5 154v4 M349.5 498v3 M355.5 154v8 M355.5 494v7 M362.5 154v4 M362.5 498v3 M369.5 154v4 M369.5 498v3 M376.5 154v4 M376.5 498v3 M383.5 154v4 M383.5 498v3 M389.5 154v6 M389.5 496v5 M396.5 154v4 M396.5 498v3 M403.5 154v4 M403.5 498v3 M410.5 154v4 M410.5 498v3 M417.5 154v4 M417.5 498v3 M423.5 154v8 M423.5 494v7 M430.5 154v4 M430.5 498v3 M437.5 154v4 M437.5 498v3 M444.5 154v4 M444.5 498v3 M451.5 154v4 M451.5 498v3 M458.5 154v6 M458.5 496v5 M464.5 154v4 M464.5 498v3 M471.5 154v4 M471.5 498v3 M478.5 154v4 M478.5 498v3 M485.5 154v4 M485.5 498v3 M492.5 154v8 M492.5 494v7 M498.5 154v4 M498.5 498v3 M505.5 154v4 M505.5 498v3 M512.5 154v4 M512.5 498v3 M519.5 154v4 M519.5 498v3 M526.5 154v6 M526.5 496v5 M532.5 154v4 M532.5 498v3 M539.5 154v4 M539.5 498v3 M546.5 154v4 M546.5 498v3 M553.5 154v4 M553.5 498v3 M560.5 154v8 M560.5 494v7 M567.5 154v4 M567.5 498v3 M573.5 154v4 M573.5 498v3 M580.5 154v4 M580.5 498v3 M587.5 154v4 M587.5 498v3 M594.5 154v6 M594.5 496v5 M601.5 154v4 M601.5 498v3 M607.5 154v4 M607.5 498v3 M614.5 154v4 M614.5 498v3 M621.5 154v4 M621.5 498v3 M628.5 154v8 M628.5 494v7 M635.5 154v4 M635.5 498v3 M641.5 154v4 M641.5 498v3 M648.5 154v4 M648.5 498v3 M655.5 154v4 M655.5 498v3 M662.5 154v6 M662.5 496v5 M669.5 154v4 M669.5 498v3 M676.5 154v4 M676.5 498v3 M682.5 154v4 M682.5 498v3 M689.5 154v4 M689.5 498v3 M696.5 154v8 M696.5 494v7 M703.5 154v4 M703.5 498v3 M710.5 154v4 M710.5 498v3 M716.5 154v4 M716.5 498v3 M723.5 154v4 M723.5 498v3 M730.5 154v6 M730.5 496v5 M737.5 154v4 M737.5 498v3 M744.5 154v4 M744.5 498v3 M750.5 154v4 M750.5 498v3 M757.5 154v4 M757.5 498v3 M84 157.5h4 M763 157.5h3 M84 161.5h4 M763 161.5h3 M84 164.5h4 M763 164.5h3 M84 168.5h4 M763 168.5h3 M84 171.5h6 M761 171.5h5 M84 175.5h4 M763 175.5h3 M84 178.5h4 M763 178.5h3 M84 182.5h4 M763 182.5h3 M84 185.5h4 M763 185.5h3 M84 189.5h8 M759 189.5h7 M84 192.5h4 M763 192.5h3 M84 196.5h4 M763 196.5h3 M84 199.5h4 M763 199.5h3 M84 202.5h4 M763 202.5h3 M84 206.5h6 M761 206.5h5 M84 209.5h4 M763 209.5h3 M84 213.5h4 M763 213.5h3 M84 216.5h4 M763 216.5h3 M84 220.5h4 M763 220.5h3 M84 223.5h8 M759 223.5h7 M84 227.5h4 M763 227.5h3 M84 230.5h4 M763 230.5h3 M84 234.5h4 M763 234.5h3 M84 237.5h4 M763 237.5h3 M84 240.5h6 M761 240.5h5 M84 244.5h4 M763 244.5h3 M84 247.5h4 M763 247.5h3 M84 251.5h4 M763 251.5h3 M84 254.5h4 M763 254.5h3 M84 258.5h8 M759 258.5h7 M84 261.5h4 M763 261.5h3 M84 265.5h4 M763 265.5h3 M84 268.5h4 M763 268.5h3 M84 272.5h4 M763 272.5h3 M84 275.5h6 M761 275.5h5 M84 279.5h4 M763 279.5h3 M84 282.5h4 M763 282.5h3 M84 285.5h4 M763 285.5h3 M84 289.5h4 M763 289.5h3 M84 292.5h8 M759 292.5h7 M84 296.5h4 M763 296.5h3 M84 299.5h4 M763 299.5h3 M84 303.5h4 M763 303.5h3 M84 306.5h4 M763 306.5h3 M84 310.5h6 M761 310.5h5 M84 313.5h4 M763 313.5h3 M84 317.5h4 M763 317.5h3 M84 320.5h4 M763 320.5h3 M84 324.5h4 M763 324.5h3 M84 327.5h8 M759 327.5h7 M84 330.5h4 M763 330.5h3 M84 334.5h4 M763 334.5h3 M84 337.5h4 M763 337.5h3 M84 341.5h4 M763 341.5h3 M84 344.5h6 M761 344.5h5 M84 348.5h4 M763 348.5h3 M84 351.5h4 M763 351.5h3 M84 355.5h4 M763 355.5h3 M84 358.5h4 M763 358.5h3 M84 362.5h8 M759 362.5h7 M84 365.5h4 M763 365.5h3 M84 369.5h4 M763 369.5h3 M84 372.5h4 M763 372.5h3 M84 375.5h4 M763 375.5h3 M84 379.5h6 M761 379.5h5 M84 382.5h4 M763 382.5h3 M84 386.5h4 M763 386.5h3 M84 389.5h4 M763 389.5h3 M84 393.5h4 M763 393.5h3 M84 396.5h8 M759 396.5h7 M84 400.5h4 M763 400.5h3 M84 403.5h4 M763 403.5h3 M84 407.5h4 M763 407.5h3 M84 410.5h4 M763 410.5h3 M84 413.5h6 M761 413.5h5 M84 417.5h4 M763 417.5h3 M84 420.5h4 M763 420.5h3 M84 424.5h4 M763 424.5h3 M84 427.5h4 M763 427.5h3 M84 431.5h8 M759 431.5h7 M84 434.5h4 M763 434.5h3 M84 438.5h4 M763 438.5h3 M84 441.5h4 M763 441.5h3 M84 445.5h4 M763 445.5h3 M84 448.5h6 M761 448.5h5 M84 452.5h4 M763 452.5h3 M84 455.5h4 M763 455.5h3 M84 458.5h4 M763 458.5h3 M84 462.5h4 M763 462.5h3 M84 465.5h8 M759 465.5h7 M84 469.5h4 M763 469.5h3 M84 472.5h4 M763 472.5h3 M84 476.5h4 M763 476.5h3 M84 479.5h4 M763 479.5h3 M84 483.5h6 M761 483.5h5 M84 486.5h4 M763 486.5h3 M84 490.5h4 M763 490.5h3 M84 493.5h4 M763 493.5h3 M84 497.5h4 M763 497.5h3"/>
</g>
</svg>


<!-- plot header text -->
<div class="t hd" style="left:30px;top:102px">dBFS</div>
<div class="t hd" style="left:83px;top:102px">Sample: 47.88 % / 8192</div>
<div class="t hd" style="left:303px;top:102px">Sample rate: 40000</div>
<div class="t hd" style="left:547px;top:102px">Marker 2 -&gt; 3.062 kHz -67.269 dBFS</div>
<div class="t" style="left:25px;top:128px;font-size:13px;color:#e6e6e6">FFT</div>
<svg class="abs" style="left:752px;top:131px" width="12" height="14" viewBox="0 0 12 14"><path d="M3.2 2.2l5.4 4.8-5.4 4.8" fill="none" stroke="#b0b0b0" stroke-width="1.5"/></svg>
<div class="abs" style="left:0;top:151px;width:84px;height:369px;overflow:hidden">
<div class="t yl" style="left:21px;top:-2.8px">0 dB</div>
<div class="t yl" style="left:21px;top:31.8px">-12 dB</div>
<div class="t yl" style="left:21px;top:66.4px">-24 dB</div>
<div class="t yl" style="left:21px;top:101.0px">-36 dB</div>
<div class="t yl" style="left:21px;top:135.6px">-48 dB</div>
<div class="t yl" style="left:21px;top:170.2px">-60 dB</div>
<div class="t yl" style="left:21px;top:204.8px">-72 dB</div>
<div class="t yl" style="left:21px;top:239.4px">-84 dB</div>
<div class="t yl" style="left:21px;top:274.0px">-96 dB</div>
<div class="t yl" style="left:21px;top:308.6px">-108 dB</div>
<div class="t yl" style="left:21px;top:343.2px">-120 dB</div>
</div>
<div class="t xl" style="left:68.1px;top:504.7px">0 Hz</div>
<div class="t xl" style="left:133.0px;top:504.7px">2 kHz</div>
<div class="t xl" style="left:202.0px;top:504.7px">4 kHz</div>
<div class="t xl" style="left:270.1px;top:504.7px">6 kHz</div>
<div class="t xl" style="left:339.5px;top:504.7px">8 kHz</div>
<div class="t xl" style="left:404.4px;top:504.7px">10 kHz</div>
<div class="t xl" style="left:473.5px;top:504.7px">12 kHz</div>
<div class="t xl" style="left:542.2px;top:504.7px">14 kHz</div>
<div class="t xl" style="left:610.7px;top:504.7px">16 kHz</div>
<div class="t xl" style="left:678.8px;top:504.7px">18 kHz</div>
<div class="t xl" style="left:728.0px;top:504.7px">20 kHz</div>
<div class="t" style="left:350px;top:326px;font-size:12.78px;color:#8e8e8e">(7665.1982, -66.2428)</div>

<!-- markers -->
<svg class="abs" style="left:120px;top:150px" width="90" height="215" viewBox="120 150 90 215">
<path d="M136 159.8L146.2 170 136 180.2 125.8 170z" fill="#fff200"/>
<path d="M188 339.35L196.65 348 188 356.65 179.35 348z" fill="#e81c2a" stroke="#fff200" stroke-width="2.2"/>
</svg>
<div class="abs" style="left:120px;top:154px;width:40px;height:3px;overflow:hidden"><div class="t b" style="left:8.5px;top:-7px;font-size:11px;color:#fff;transform:scaleX(1.1);transform-origin:0 0">M1</div></div>
<div class="t b" id="m2" style="left:179.5px;top:325px;font-size:11px;color:#fff;transform:scaleX(1.1);transform-origin:0 0">M2</div>

<!-- table -->
<div class="t tb" style="left:25px;top:536px">Marker</div>
<div class="t tb" style="left:111px;top:536px">Channel</div>
<div class="t tb" style="left:205px;top:536px">Frequency</div>
<div class="t tb" style="left:316px;top:536px">Magnitude</div>
<div class="t tb" style="left:427px;top:536px">Type</div>
<div class="t tb" style="left:24px;top:563px">M2</div>
<div class="t tb" style="left:110px;top:563px">1</div>
<div class="t tb" style="left:204px;top:563px">3.062 kHz</div>
<div class="t tb" style="left:315px;top:563px">-67.2691</div>
<div class="t tb" style="left:426px;top:563px">Peak</div>
<div class="t tb" style="left:24px;top:593px">M1</div>
<div class="t tb" style="left:110px;top:593px">1</div>
<div class="t tb" style="left:204px;top:593px">1.528 kHz</div>
<div class="t tb" style="left:315px;top:593px">-5.49839</div>
<div class="t tb" style="left:426px;top:593px">Peak</div>


<!-- RIGHT PANEL -->
<div class="t" style="left:800px;top:102px;font-size:14px;color:#f0f0f0">Markers</div>
<div class="t" id="ch1lab" style="left:1065px;top:102px;font-size:14px;color:#f0f0f0">Channel 1</div>
<div class="abs" style="left:800px;top:136.5px;width:330px;height:2px;background:#ff7200"></div>
<div class="mk" style="left:817px;background:#f44336;border-color:#f44336"><span>1</span></div>
<div class="mk" style="left:880px;background:#2196f3;border-color:#2196f3"><span>2</span></div>
<div class="mk" style="left:943px;border-color:#8bc34a"><span>3</span></div>
<div class="mk" style="left:1006px;border-color:#ff5722"><span>4</span></div>
<div class="mk" style="left:1069px;border-color:#607d8b"><span>5</span></div>

<div class="t" style="left:800px;top:218px;font-size:11.6px;color:#e0e0e0">MARKER</div>
<div class="abs" style="left:853px;top:223px;width:277px;height:1px;background:#9a9a9a"></div>
<div class="btn" style="left:800px;top:247px;width:36px;height:36px;background:#5c5c6a"></div>
<div class="btn" style="left:800px;top:285px;width:36px;height:36px;background:#5c5c6a"></div>
<svg class="abs" style="left:800px;top:247px" width="36" height="74" viewBox="0 0 36 74" stroke="#fff" stroke-width="1.9" fill="none"><path d="M11 18h14M18 11v14M11 56h14"/></svg>
<div class="t" style="left:851px;top:249px;font-size:13px;color:#a4a4a4">Frequency Position</div>
<div class="t" style="left:856px;top:274px;font-size:15.6px;color:#e6e6e6">3.062</div>
<div class="abs" style="left:851px;top:293px;width:214px;height:1px;background:#60606a"></div>
<div class="t" style="left:851.5px;top:304.5px;font-size:13.5px;color:#e6e6e6">kHz</div>
<svg class="abs" style="left:1043px;top:305px" width="14" height="12" viewBox="0 0 14 12"><path d="M2.5 3.5l4.5 4.5 4.5-4.5" fill="none" stroke="#e0e0e0" stroke-width="1.6"/></svg>
<svg class="abs" style="left:1077.9px;top:256.75px" width="54" height="54" viewBox="-27 -27 54 54" fill="none">
<circle r="22.7" stroke="#19191c" stroke-width="3.1"/>
<path d="M-18.5 -13.15A22.7 22.7 0 0 1 -0.5 -22.69" stroke="#4a64ff" stroke-width="3.1"/>
<path d="M-13.65 -9.35L-8.3 -5.25" stroke="#f0f0f0" stroke-width="1.9"/>
</svg>

<div class="btn blue" style="left:935px;top:348px;width:60px;height:60px"></div>
<div class="btn blue" style="left:860px;top:423px;width:60px;height:60px"></div>
<div class="btn blue" style="left:935px;top:423px;width:60px;height:60px"></div>
<div class="btn blue" style="left:1010px;top:423px;width:60px;height:60px"></div>
<div class="btn blue" style="left:935px;top:498px;width:60px;height:60px"></div>
<div class="t b" style="left:953.5px;top:371px;font-size:13.6px">Ampl</div>
<div class="t b" style="left:953.5px;top:521px;font-size:13.6px">Ampl</div>
<div class="t b" style="left:881px;top:446px;font-size:14px">Peak</div>
<div class="t b" style="left:947px;top:446px;font-size:16px">Peak</div>
<div class="t b" style="left:1014px;top:446px;font-size:14px">Peak</div>
<svg class="abs" style="left:860px;top:348px" width="210" height="210" viewBox="860 348 210 210" fill="none" stroke="#fff" stroke-width="1.8">
<path d="M946 384v-11M941.2 377.6l4.8-4.8 4.8 4.8"/>
<path d="M946 523v11M941.2 529.4l4.8 4.8 4.8-4.8"/>
<path d="M879 453h-11M872.6 448.2l-4.8 4.8 4.8 4.8"/>
<path d="M1052 453h11M1058.4 448.2l4.8 4.8-4.8 4.8"/>
</svg>

<div class="t" style="left:800px;top:591px;font-size:12px;color:#e0e0e0">GENERAL</div>
<div class="abs" style="left:860px;top:596px;width:270px;height:1px;background:#9a9a9a"></div>
<div class="t" style="left:800px;top:624.5px;font-size:12.8px;color:#a4a4a4">Marker Table</div>
<div class="abs" style="left:1073px;top:620px;width:56px;height:22px;background:#19191d;border-radius:4px"></div>
<div class="abs" style="left:1073px;top:620px;width:29px;height:22px;background:#4a64ff;border-radius:4px"></div>
<div class="t" style="left:1079px;top:624.5px;font-size:13px;color:#e8e8ff">On</div>
<div class="t" style="left:1107px;top:624.5px;font-size:13px;color:#9a9a9a">Off</div>

<!-- BOTTOM BAR -->
<div class="abs" style="left:1px;top:674px;width:143px;height:42px;background:#202026;border-top-right-radius:5px"></div>
<div class="abs" style="left:1px;top:714px;width:143px;height:2px;background:#ff7200"></div>
<svg class="abs" style="left:12px;top:684px" width="20" height="20" viewBox="0 0 20 20"><circle cx="10" cy="10.1" r="9.1" fill="#ff7200"/><path d="M5.5 10.1l3.5 3.2 5.9-6.7" fill="none" stroke="#1c1c22" stroke-width="1.9"/></svg>
<div class="t b" style="left:43px;top:687.5px;font-size:13.5px;color:#b4b4b4">CH 1</div>
<div class="pill" style="left:92px;top:684px"></div>
<svg class="abs" style="left:156px;top:685px" width="18" height="18" viewBox="0 0 18 18"><circle cx="9" cy="9" r="8.2" fill="none" stroke="#8a1cf5" stroke-width="2"/></svg>
<div class="t b" style="left:186px;top:687.5px;font-size:13.5px;color:#b4b4b4">CH 2</div>
<div class="pill" style="left:235px;top:684px"></div>
<svg class="abs" style="left:289px;top:687px" width="16" height="16" viewBox="0 0 16 16"><path d="M8 1v14M1 8h14" stroke="#808080" stroke-width="1.4"/></svg>

<div class="abs" style="left:799px;top:686px;width:18px;height:18px;background:#141416;border:1px solid #585864;border-radius:4px"></div>
<div class="t" style="left:823px;top:689px;font-size:12.7px;color:#f0f0f0">Cursors</div>
<div class="pill" style="left:874px;top:685px"></div>
<div class="t" style="left:930.5px;top:688.5px;font-size:13.5px;color:#f0f0f0">Sweep</div>
<div class="pill" style="left:978px;top:685px"></div>
<div class="t" style="left:1034px;top:688px;font-size:14px;color:#f0f0f0">Markers</div>
<div class="pill" style="left:1091px;top:685px;background:#4a64ff"></div>
<svg class="abs" style="left:92px;top:684px" width="40" height="20" viewBox="0 0 40 20"><g stroke="#9a9aa2" stroke-width="1.4" fill="none"><path d="M14 7h12.5M14 13h12.5"/></g><circle cx="23.5" cy="7" r="1.7" fill="#3a3a44" stroke="#9a9aa2" stroke-width="1.1"/><circle cx="16.8" cy="13" r="1.7" fill="#3a3a44" stroke="#9a9aa2" stroke-width="1.1"/></svg>
<svg class="abs" style="left:235px;top:684px" width="40" height="20" viewBox="0 0 40 20"><g stroke="#9a9aa2" stroke-width="1.4" fill="none"><path d="M14 7h12.5M14 13h12.5"/></g><circle cx="23.5" cy="7" r="1.7" fill="#3a3a44" stroke="#9a9aa2" stroke-width="1.1"/><circle cx="16.8" cy="13" r="1.7" fill="#3a3a44" stroke="#9a9aa2" stroke-width="1.1"/></svg>
<svg class="abs" style="left:874px;top:685px" width="40" height="20" viewBox="0 0 40 20"><g stroke="#9a9aa2" stroke-width="1.4" fill="none"><path d="M14 7h12.5M14 13h12.5"/></g><circle cx="23.5" cy="7" r="1.7" fill="#3a3a44" stroke="#9a9aa2" stroke-width="1.1"/><circle cx="16.8" cy="13" r="1.7" fill="#3a3a44" stroke="#9a9aa2" stroke-width="1.1"/></svg>
<svg class="abs" style="left:978px;top:685px" width="40" height="20" viewBox="0 0 40 20"><g stroke="#9a9aa2" stroke-width="1.4" fill="none"><path d="M14 7h12.5M14 13h12.5"/></g><circle cx="23.5" cy="7" r="1.7" fill="#3a3a44" stroke="#9a9aa2" stroke-width="1.1"/><circle cx="16.8" cy="13" r="1.7" fill="#3a3a44" stroke="#9a9aa2" stroke-width="1.1"/></svg>
<svg class="abs" style="left:1091px;top:685px" width="40" height="20" viewBox="0 0 40 20"><g stroke="#ffffff" stroke-width="1.4" fill="none"><path d="M14 7h12.5M14 13h12.5"/></g><circle cx="23.5" cy="7" r="1.7" fill="#4a64ff" stroke="#ffffff" stroke-width="1.1"/><circle cx="16.8" cy="13" r="1.7" fill="#4a64ff" stroke="#ffffff" stroke-width="1.1"/></svg>

<div id="end"></div>
</body></html>
